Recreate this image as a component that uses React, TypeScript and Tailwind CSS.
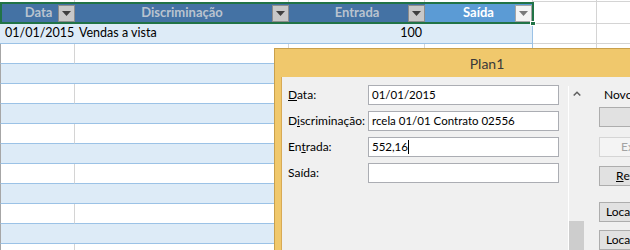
import React from "react";

const sheetFont = { fontFamily: "Lato, 'Noto Sans', sans-serif" };

function DropBtn({ light }: { light?: boolean }) {
  return (
    <div
      className={
        light
          ? "absolute right-0 top-[1px] w-[17px] h-[17px] bg-[#f4f4f4] border border-[#a6a6a6] flex items-center justify-center"
          : "absolute right-0 top-[1px] w-[17px] h-[17px] bg-[#c8c8c8] border border-[#8c8c8c] flex items-center justify-center"
      }
    >
      <svg width="9" height="5" viewBox="0 0 9 5">
        <path d="M0 0 L9 0 L4.5 5 Z" fill={light ? "#7a7a7a" : "#404040"} />
      </svg>
    </div>
  );
}

function BodyRow({ blue }: { blue: boolean }) {
  const base = blue ? "bg-[#ddebf7]" : "bg-white";
  return (
    <div className="flex h-[20px]">
      <div className={`w-[75px] border-b border-b-[#9bc2e6] border-l border-l-[#a6a6a6] ${base} ${blue ? "" : "border-r border-r-[#d4d4d4]"}`} />
      <div className={`w-[214px] border-b border-b-[#9bc2e6] ${base} ${blue ? "" : "border-r border-r-[#d4d4d4]"}`} />
      <div className={`w-[136px] border-b border-b-[#9bc2e6] ${base} ${blue ? "" : "border-r border-r-[#d4d4d4]"}`} />
      <div className={`w-[108px] border-b border-b-[#9bc2e6] border-r border-r-[#9bc2e6] ${base}`} />
      <div className="w-[64px] border-b border-r border-[#d4d4d4] bg-white" />
      <div className="flex-1 border-b border-[#d4d4d4] bg-white" />
    </div>
  );
}

function Btn({ children, disabled, pl }: { children?: React.ReactNode; disabled?: boolean; pl: string }) {
  return (
    <div
      className={
        disabled
          ? `w-[100px] h-[20px] shrink-0 border border-[#d5d5d5] bg-[#f4f4f4] text-[#a3a3a3] flex items-center text-[12px] whitespace-nowrap ${pl}`
          : `w-[100px] h-[20px] shrink-0 border border-[#adadad] bg-[#e1e1e1] text-black flex items-center text-[12px] whitespace-nowrap ${pl}`
      }
    >
      {children}
    </div>
  );
}

function Field({ label, value, caret }: { label: React.ReactNode; value: string; caret?: boolean }) {
  return (
    <div className="flex items-center h-[20px]">
      <div className="w-[80px] text-[12px] text-black leading-none">{label}</div>
      <div className="w-[191px] h-[20px] border border-[#abadb3] bg-white pl-[3px] flex items-center overflow-hidden whitespace-nowrap text-[11.5px] text-black">
        {value}
        {caret && <span className="inline-block w-px h-[14px] bg-black" />}
      </div>
    </div>
  );
}

export default function App() {
  const rows = Array.from({ length: 11 }, (_, i) => i % 2 === 1);
  return (
    <div className="relative w-[630px] h-[250px] overflow-hidden bg-white" style={sheetFont}>
      {/* top strip */}
      <div className="flex h-[2px]">
        <div className="w-[75px] border-r border-[#d4d4d4]" />
        <div className="w-[214px] border-r border-[#d4d4d4]" />
        <div className="w-[136px] border-r border-[#d4d4d4]" />
        <div className="w-[108px] border-r border-[#d4d4d4]" />
        <div className="w-[64px] border-r border-b border-[#d4d4d4]" />
        <div className="flex-1 border-b border-[#d4d4d4]" />
      </div>
      {/* header */}
      <div className="flex h-[22px]">
        <div className="w-[534px] border-2 border-[#217346] flex text-[13px] font-bold">
          <div className="relative w-[73px] bg-[#4472a4] text-[#b9c3cf] flex items-center justify-center">
            Data
            <DropBtn />
          </div>
          <div className="relative w-[214px] bg-[#4472a4] text-[#b9c3cf] flex items-center justify-center">
            Discriminação
            <DropBtn />
          </div>
          <div className="relative w-[136px] bg-[#4472a4] text-[#b9c3cf] flex items-center justify-center">
            Entrada
            <DropBtn />
          </div>
          <div className="relative flex-1 bg-[#5b9bd5] text-white flex items-center justify-center">
            Saída
            <DropBtn light />
          </div>
        </div>
        <div className="w-[63px] border-r border-b border-[#d4d4d4]" />
        <div className="flex-1 border-b border-[#d4d4d4]" />
      </div>
      {/* data row */}
      <div className="flex h-[20px] text-[12.5px] text-black">
        <div className="w-[75px] bg-[#ddebf7] border-b border-[#9bc2e6] pl-[5px] flex items-center whitespace-nowrap">01/01/2015</div>
        <div className="w-[214px] bg-[#ddebf7] border-b border-[#9bc2e6] pl-[4px] flex items-center whitespace-nowrap">Vendas a vista</div>
        <div className="w-[136px] bg-[#ddebf7] border-b border-[#9bc2e6] pr-[3px] flex items-center justify-end">100</div>
        <div className="w-[108px] bg-[#ddebf7] border-b border-r border-[#9bc2e6]" />
        <div className="w-[64px] border-b border-r border-[#d4d4d4]" />
        <div className="flex-1 border-b border-[#d4d4d4]" />
      </div>
      {rows.map((b, i) => (
        <BodyRow key={i} blue={b} />
      ))}

      {/* UserForm window */}
      <div className="absolute left-[274px] top-[48px] w-[426px] h-[230px] bg-[#f0c86c] border border-[#c9a04c] flex flex-col">
        <div className="h-[28px] shrink-0 flex items-center justify-center text-[14px] text-[#3a3a3a]">Plan1</div>
        <div className="flex-1 ml-[6px] bg-[#f0f0f0] border-l border-[#d8aa55] flex">
          <div className="w-[290px] pl-[6px] pt-[8px] flex flex-col gap-[6px]">
            <Field label={<><span className="underline">D</span>ata:</>} value="01/01/2015" />
            <Field label={<>D<span className="underline">i</span>scriminação:</>} value="rcela 01/01 Contrato 02556" />
            <Field label={<>En<span className="underline">t</span>rada:</>} value="552,16" caret />
            <Field label={<>Saída:</>} value="" />
          </div>
          <div className="w-px mt-[9px] bg-white" />
          <div className="w-[15px] flex flex-col items-center">
            <div className="h-[14px]" />
            <svg width="8" height="5" viewBox="0 0 8 5">
              <path d="M0.7 4.5 L4 1.2 L7.3 4.5" stroke="#606060" strokeWidth="1.5" fill="none" />
            </svg>
            <div className="mt-[125px] w-[15px] h-[60px] bg-[#cdcdcd]" />
          </div>
          <div className="pl-[15px] pt-[8px] flex flex-col">
            <div className="h-[20px] pl-[5px] flex items-center text-[12px] text-black whitespace-nowrap">Novo registro</div>
            <div className="mt-[2px]"><Btn pl="pl-[40px]">Inserir</Btn></div>
            <div className="mt-[10px]"><Btn disabled pl="pl-[21px]">Excluir</Btn></div>
            <div className="mt-[9px]"><Btn pl="pl-[16px]"><span className="underline">R</span>estaurar</Btn></div>
            <div className="mt-[16px]"><Btn pl="pl-[6px]">Localizar anterior</Btn></div>
            <div className="mt-[8px]"><Btn pl="pl-[6px]">Localizar próximo</Btn></div>
          </div>
        </div>
      </div>
      {/* fill handle */}
      <div className="absolute left-[530px] top-[21px] w-[6px] h-[5px] bg-[#217346] border border-white" />
    </div>
  );
}
